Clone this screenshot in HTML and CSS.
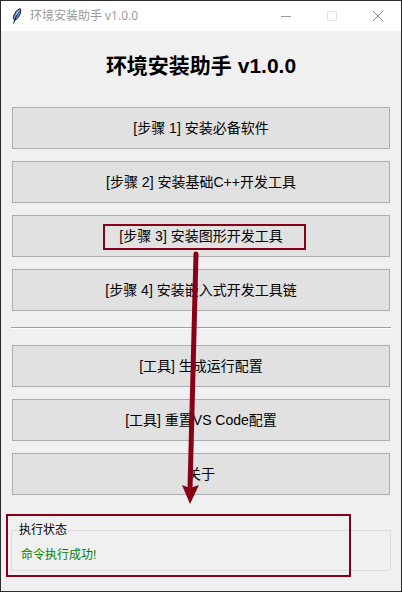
FILE: index.html
```html
<!DOCTYPE html>
<html lang="zh-CN">
<head>
    <meta charset="UTF-8">
    <meta name="viewport" content="width=device-width, initial-scale=1.0">
    <title>环境安装助手 v1.0.0</title>
    <link rel="stylesheet" href="styles.css">
</head>
<body>
    <div class="window">
        <!-- Title bar -->
        <header class="titlebar">
            <svg class="feather" width="12" height="18" viewBox="0 0 12 18">
                <path d="M3.5 13 Q1.5 11 3 8 Q5 3 9 1.5 Q10.500 2 9.500 6 Q8 11 4.500 13 Z" fill="#6ba4e8" stroke="#15171c" stroke-width="1"/>
                <path d="M2.500 16.500 L4.500 11 L8 4" fill="none" stroke="#111" stroke-width="1"/>
                <path d="M5 8 L7.500 4" stroke="#b8dcf5" stroke-width="1"/>
            </svg>
            <span class="caption">环境安装助手 v1.0.0</span>
            <button class="control" aria-label="最小化">
                <svg width="10" height="10" viewBox="0 0 10 10"><path d="M0 5.5H10" stroke="#999"/></svg>
            </button>
            <button class="control" aria-label="最大化" disabled>
                <svg width="10" height="10" viewBox="0 0 10 10"><rect x="0.5" y="0.5" width="9" height="9" fill="none" stroke="#e6e6e6"/></svg>
            </button>
            <button class="control" aria-label="关闭">
                <svg width="10" height="10" viewBox="0 0 10 10"><path d="M0 0L10 10M10 0L0 10" stroke="#888"/></svg>
            </button>
        </header>

        <main class="content">
            <h1>环境安装助手 v1.0.0</h1>

            <!-- Install steps -->
            <div class="button-group">
                <button class="action">[步骤 1] 安装必备软件</button>
                <button class="action">[步骤 2] 安装基础C++开发工具</button>
                <button class="action marked">[步骤 3] 安装图形开发工具</button>
                <button class="action">[步骤 4] 安装嵌入式开发工具链</button>
            </div>

            <hr>

            <!-- Tools -->
            <div class="button-group">
                <button class="action">[工具] 生成运行配置</button>
                <button class="action">[工具] 重置VS Code配置</button>
                <button class="action">关于</button>
            </div>

            <!-- Status -->
            <fieldset class="status">
                <legend>执行状态</legend>
                <output>命令执行成功!</output>
            </fieldset>

            <!-- Arrow from step 3 to the status box -->
            <svg class="arrow" width="20" height="256" viewBox="0 0 20 256">
                <path d="M15 5L9 240" stroke="#880015" stroke-width="5" stroke-linecap="round"/>
                <path d="M1 236L9 239L18 236L9 255Z" fill="#880015"/>
            </svg>
        </main>
    </div>
</body>
</html>
```

FILE: styles.css
```css
*, *::after {
    box-sizing: border-box;
}
body {
    margin: 0;
    font-family: "Liberation Sans", "Noto Sans CJK SC", sans-serif;
    color: #000;
}
.window {
    display: flex;
    flex-direction: column;
    min-height: 100vh;
    border: 1px solid #2b2a2d;
    background: #f0f0f0;
}

/* Title bar */
.titlebar {
    display: flex;
    align-items: center;
    height: 30px;
    padding-left: 10px;
    background: #fff;
}
.feather {
    margin-right: 7px;
}
.caption {
    flex: 1;
    font-family: "Open Sans", "Noto Sans CJK SC", sans-serif;
    font-size: 12px;
    line-height: 18px;
    color: #999;
}
.control {
    display: flex;
    align-items: center;
    justify-content: center;
    width: 46px;
    height: 30px;
    padding: 0;
    border: none;
    background: none;
}

/* Content */
.content {
    position: relative;
    flex: 1;
    padding: 20px 10px;
}
h1 {
    margin: 0 0 26px;
    font-size: 21px;
    line-height: 30px;
    text-align: center;
}
.button-group {
    display: flex;
    flex-direction: column;
    gap: 12px;
    padding: 0 1px;
}
.action {
    position: relative;
    height: 42px;
    padding: 0;
    border: 1px solid #adadad;
    background: #e1e1e1;
    font-family: inherit;
    font-size: 14px;
    line-height: 20px;
    color: #000;
}
hr {
    height: 2px;
    margin: 16px 0;
    border: none;
    border-top: 1px solid #a0a0a0;
    background: #fff;
}
.status {
    position: relative;
    margin: 26px 0 0;
    padding: 7px 9px 6px;
    border: 1px solid #dcdcdc;
    font-size: 12px;
    line-height: 18px;
}
.status legend {
    margin-left: -3px;
    padding: 0 1px;
}
.status output {
    display: block;
    color: #008000;
}

/* Highlights */
.marked::after {
    content: "";
    position: absolute;
    top: 8px;
    left: calc(50% - 98px);
    width: 203px;
    height: 26px;
    border: 2px solid #880015;
}
.status::after {
    content: "";
    position: absolute;
    top: -25px;
    bottom: -7px;
    left: -6px;
    right: 39px;
    border: 2px solid #880015;
}
.arrow {
    position: absolute;
    top: 218px;
    left: calc(50% - 20px);
}
```
